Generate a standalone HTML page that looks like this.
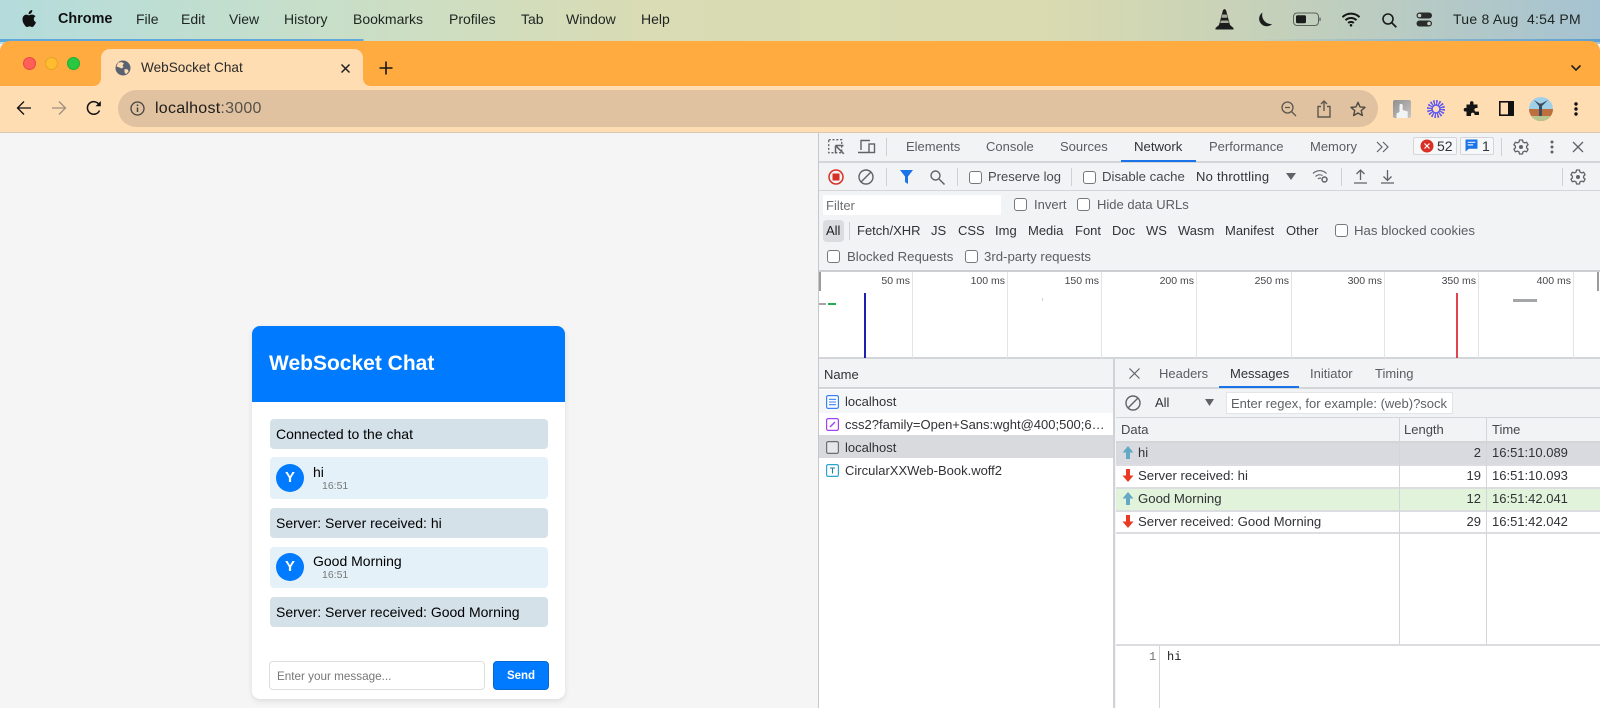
<!DOCTYPE html>
<html><head><meta charset="utf-8"><title>WebSocket Chat</title>
<style>
*{box-sizing:border-box}
html,body{margin:0;padding:0;width:1600px;height:708px;overflow:hidden;background:#f5f5f5;font-family:"Liberation Sans",Arial,sans-serif}
.a{position:absolute}
.t{position:absolute;white-space:nowrap;line-height:16px;font-size:13px;color:#303236}
.m{font-size:14px;color:#1e2422;-webkit-font-smoothing:antialiased}
.g{color:#5a5d62}
.w{font-size:13.2px}
.cb{position:absolute;width:13px;height:13px;border:1px solid #75787c;border-radius:3px;background:#fff}
.sep{position:absolute;width:1px;height:20px;background:#cdd0d4}
.ln{position:absolute;background:#d3d5d9}
.rl{position:absolute;background:#dcdde0}
.tl{position:absolute;font-size:10.5px;line-height:12px;color:#44474b;white-space:nowrap;text-align:right;width:60px;top:275px}
.msg{position:absolute;left:270px;width:278px;border-radius:4px}
svg{position:absolute;overflow:visible}
</style></head><body>

<!-- menu bar -->
<div class="a" style="left:0;top:0;width:1600px;height:44px;background:linear-gradient(90deg,#b4dcdc 0%,#c6dfcb 18%,#d9dcb4 40%,#dadbb0 65%,#c4d0ba 80%,#a6c3d2 100%)"></div>
<div class="a" style="left:0;top:39px;width:1600px;height:3px;background:linear-gradient(90deg,#5fa8dc 0,#5fa8dc 363px,rgba(95,168,220,0) 364px,rgba(95,168,220,0) 1250px,#5fa0d0 1600px)"></div>
<svg style="left:20px;top:9px" width="18" height="20" viewBox="0 0 18 20"><path fill="#111" d="M12.3 1c.1 1.2-.4 2.3-1 3-.7.8-1.700 1.300-2.700 1.200-.1-1.100.4-2.200 1-2.900C10.300 1.500 11.400 1 12.300 1zM15.500 7.200c-1 .6-1.700 1.600-1.700 2.900 0 1.500.9 2.600 2.200 3.100-.4 1.100-.9 2.100-1.600 3-.6.9-1.300 1.800-2.300 1.800-1 0-1.300-.6-2.500-.6s-1.600.6-2.500.6c-1 0-1.700-.9-2.400-1.900C3.300 14.600 2.500 12.400 2.500 10.300c0-3 2-4.700 3.900-4.700 1 0 1.900.7 2.500.7s1.600-.7 2.700-.7c.9 0 2.700.2 3.900 1.600z"/></svg>
<div class="t m" style="left:58px;top:11px;font-weight:700;color:#111;font-size:14.4px">Chrome</div>
<div class="t m" style="left:136px;top:11px">File</div>
<div class="t m" style="left:181px;top:11px">Edit</div>
<div class="t m" style="left:229px;top:11px">View</div>
<div class="t m" style="left:284px;top:11px">History</div>
<div class="t m" style="left:353px;top:11px">Bookmarks</div>
<div class="t m" style="left:449px;top:11px">Profiles</div>
<div class="t m" style="left:521px;top:11px">Tab</div>
<div class="t m" style="left:566px;top:11px">Window</div>
<div class="t m" style="left:641px;top:11px">Help</div>
<div class="t m" style="left:1453px;top:11px;letter-spacing:.25px">Tue 8 Aug</div>
<div class="t m" style="left:1527px;top:11px;letter-spacing:.25px">4:54 PM</div>
<svg style="left:1215px;top:9px" width="19" height="21" viewBox="0 0 19 21"><path fill="#1b1d1c" d="M9.500 0 11 1l4 15 3.500 3v1.500H.5V19L4 16 8 1z"/><path fill="#a9a99a" d="M7.300 5.500h4.400l.8 3.300h-6zM5.800 11.500h7.400l.7 2.500H5.100z"/></svg>
<svg style="left:1256px;top:12px" width="17" height="16" viewBox="0 0 17 16"><path fill="#1b1d1c" d="M6.500.5A7.500 7.500 0 1 0 16 12 A9 9 0 0 1 6.500.5z"/></svg>
<svg style="left:1293px;top:12px" width="29" height="15" viewBox="0 0 29 15"><rect x=".5" y="1" width="25" height="12.500" rx="3.500" fill="none" stroke="#5c625f"/><rect x="3" y="3.200" width="10" height="8" rx="1.500" fill="#1b1d1c"/><path d="M27 5.500v3.500" stroke="#6c716e" stroke-width="1.500"/></svg>
<svg style="left:1341px;top:12px" width="20" height="15" viewBox="0 0 20 15"><path d="M1.500 5.200a12 12 0 0 1 17 0M4.500 8.200a8 8 0 0 1 11 0M7.200 11a4 4 0 0 1 5.600 0" fill="none" stroke="#151716" stroke-width="2"/><circle cx="10" cy="13.300" r="1.300" fill="#151716"/></svg>
<svg style="left:1381px;top:12px" width="17" height="16" viewBox="0 0 17 16"><circle cx="7" cy="7" r="5" fill="none" stroke="#1b1d1c" stroke-width="1.600"/><path d="M10.800 10.800l4.500 4.500" stroke="#1b1d1c" stroke-width="1.800"/></svg>
<svg style="left:1416px;top:12px" width="17" height="15" viewBox="0 0 17 15"><rect x=".5" y=".5" width="15.500" height="6" rx="3" fill="#2a2c2b"/><circle cx="3.500" cy="3.500" r="1.800" fill="#c4d0c0"/><rect x=".5" y="8.500" width="15.500" height="6" rx="3" fill="#2a2c2b"/><circle cx="13" cy="11.500" r="1.800" fill="#c4d0c0"/></svg>

<!-- tab strip -->
<div class="a" style="left:0;top:41px;width:1600px;height:46px;background:#ffab40;border-radius:10px 10px 0 0"></div>
<div class="a" style="left:0;top:86px;width:1600px;height:46px;background:#ffddb3"></div>
<div class="a" style="left:0;top:132px;width:1600px;height:1px;background:#d8c8b4"></div>
<div class="a" style="left:101px;top:49px;width:262px;height:38px;background:#ffddb3;border-radius:9px 9px 0 0"></div>
<svg style="left:93px;top:78px" width="8" height="8" viewBox="0 0 8 8"><path d="M8 0v8H0c5 0 8-3 8-8z" fill="#ffddb3"/></svg>
<svg style="left:363px;top:78px" width="8" height="8" viewBox="0 0 8 8"><path d="M0 0v8h8C3 8 0 5 0 0z" fill="#ffddb3"/></svg>
<div class="a" style="left:23px;top:57px;width:13px;height:13px;border-radius:50%;background:#ff5f57;border:.5px solid #e5484d"></div>
<div class="a" style="left:44.500px;top:57px;width:13px;height:13px;border-radius:50%;background:#febc2e;border:.5px solid #e6a325"></div>
<div class="a" style="left:66.500px;top:57px;width:13px;height:13px;border-radius:50%;background:#28c840;border:.5px solid #22ad37"></div>
<svg style="left:115px;top:60px" width="16" height="16" viewBox="0 0 16 16"><circle cx="8" cy="8" r="7.500" fill="#5a6170"/><path d="M3 2.800 6.500 2 9 3.500 7.500 5.500 8.500 7 6.800 8.500 4.500 7.500 1.500 6.500zM9.500 9l3.500.5.500 2-2.500 2.800-1.500-2z" fill="#ffddb3"/></svg>
<div class="t" style="left:141px;top:60px;font-size:13.600px;color:#2b2a28">WebSocket Chat</div>
<svg style="left:340px;top:63px" width="11" height="11" viewBox="0 0 11 11"><path d="M1.500 1.500l8 8M9.500 1.500l-8 8" stroke="#1f1f1f" stroke-width="1.500"/></svg>
<svg style="left:379px;top:61px" width="14" height="14" viewBox="0 0 14 14"><path d="M7 .5v13M.5 7h13" stroke="#151515" stroke-width="1.600"/></svg>
<svg style="left:1570px;top:64px" width="12" height="8" viewBox="0 0 12 8"><path d="M1.500 1.500 6 6l4.500-4.500" fill="none" stroke="#222" stroke-width="1.600"/></svg>

<!-- toolbar -->
<svg style="left:16px;top:100px" width="16" height="16" viewBox="0 0 16 16"><path d="M15 8H2M8 1.500 1.500 8 8 14.500" fill="none" stroke="#111" stroke-width="1.300"/></svg>
<svg style="left:51px;top:100px" width="16" height="16" viewBox="0 0 16 16"><path d="M1 8h13M8 1.500 14.500 8 8 14.500" fill="none" stroke="#a08f7e" stroke-width="1.300"/></svg>
<svg style="left:86px;top:100px" width="16" height="16" viewBox="0 0 16 16"><path d="M13.500 10.500A6.300 6.300 0 1 1 13 4.500" fill="none" stroke="#111" stroke-width="1.500"/><path d="M14.800 1v5.300H9.500z" fill="#111"/></svg>
<div class="a" style="left:118px;top:90px;width:1260px;height:37px;border-radius:18.500px;background:#e0c2a0"></div>
<svg style="left:130px;top:101px" width="15" height="15" viewBox="0 0 15 15"><circle cx="7.500" cy="7.500" r="6.500" fill="none" stroke="#46433f" stroke-width="1.300"/><path d="M7.500 6.500v4.500" stroke="#46433f" stroke-width="1.500"/><circle cx="7.500" cy="4.300" r=".9" fill="#46433f"/></svg>
<div class="t" style="left:155px;top:101px;font-size:16px;color:#1d1c1a;letter-spacing:.25px">localhost<span style="color:#57524b">:3000</span></div>
<svg style="left:1281px;top:101px" width="16" height="16" viewBox="0 0 16 16"><circle cx="6.500" cy="6.500" r="5.500" fill="none" stroke="#5d574f" stroke-width="1.300"/><path d="M10.500 10.500l4.500 4.500M4 6.500h5" stroke="#5d574f" stroke-width="1.300"/></svg>
<svg style="left:1317px;top:100px" width="14" height="18" viewBox="0 0 14 18"><path d="M4 6.500H1v10.500h12V6.500h-3M7 11V1.500M4 4l3-3 3 3" fill="none" stroke="#5d574f" stroke-width="1.400"/></svg>
<svg style="left:1350px;top:101px" width="16" height="16" viewBox="0 0 16 16"><path d="M8 1.300l2 4.600 5 .4-3.800 3.300 1.200 4.900L8 12l-4.400 2.500 1.200-4.900L1 6.300l5-.4z" fill="none" stroke="#4e4942" stroke-width="1.400" stroke-linejoin="round"/></svg>
<div class="a" style="left:1393px;top:100px;width:18px;height:18px;border-radius:2px;background:linear-gradient(135deg,#8f8f8f,#c8c6c4)"></div>
<svg style="left:1393px;top:100px" width="18" height="18" viewBox="0 0 18 18"><path d="M3.500 18v-4.500l3-1.500V5.500a1.600 1.600 0 0 1 3.200 0V10l5 1.500V18z" fill="#f1f4f6"/></svg>
<svg style="left:1427px;top:100px" width="18" height="18" viewBox="0 0 18 18"><g fill="none" stroke="#5a55f5"><circle cx="9" cy="9" r="6.200" stroke-width="5.600" stroke-dasharray="1.300 1.130"/><circle cx="9" cy="9" r="4" stroke-width="1.500"/></g></svg>
<svg style="left:1464px;top:101px" width="16" height="16" viewBox="0 0 16 16"><path fill="#141414" d="M6 1.500a1.800 1.800 0 0 1 3.500 0V3.500h4V7h-1.300a1.800 1.800 0 0 0 0 3.600H15V14H10.500v-1a1.800 1.800 0 0 0-3.500 0v2H2.500V10.500H1.500a1.800 1.800 0 0 1 0-3.600h1V3.500H6z"/></svg>
<svg style="left:1499px;top:101px" width="15" height="15" viewBox="0 0 15 15"><rect x=".8" y=".8" width="13.400" height="13.400" fill="none" stroke="#111" stroke-width="1.600"/><rect x="9" y="1" width="5" height="13" fill="#111"/></svg>
<svg style="left:1529px;top:97px" width="24" height="24" viewBox="0 0 24 24"><defs><clipPath id="c"><circle cx="12" cy="12" r="12"/></clipPath></defs><g clip-path="url(#c)"><rect width="24" height="24" fill="#9fd0e8"/><rect y="12" width="24" height="12" fill="#bd6f3e"/><rect y="19" width="24" height="5" fill="#b9c58f"/><path d="M5 3l5 6v10h3V9l6-6-6.500 3.500h-2z" fill="#3c4d5e"/></g></svg>
<svg style="left:1574px;top:102px" width="4" height="14" viewBox="0 0 4 14"><circle cx="2" cy="2" r="1.700" fill="#111"/><circle cx="2" cy="7" r="1.700" fill="#111"/><circle cx="2" cy="12" r="1.700" fill="#111"/></svg>

<!-- page: chat -->
<div class="a" style="left:0;top:133px;width:818px;height:575px;background:#f5f5f5"></div>
<div class="a" style="left:252px;top:326px;width:313px;height:373px;background:#fff;border-radius:8px;box-shadow:0 2px 6px rgba(0,0,0,.1)"></div>
<div class="a" style="left:252px;top:326px;width:313px;height:76px;background:#007bff;border-radius:8px 8px 0 0"></div>
<div class="t" style="left:269px;top:353px;font-size:21px;line-height:22px;font-weight:700;color:#fff">WebSocket Chat</div>
<div class="msg" style="top:419px;height:30px;background:#d4e1e9"></div>
<div class="t" style="left:276px;top:426px;font-size:14px;color:#000">Connected to the chat</div>
<div class="msg" style="top:457px;height:42px;background:#e4f1f8"></div>
<div class="a" style="left:276px;top:464px;width:28px;height:28px;border-radius:50%;background:#007bff;color:#fff;font-weight:700;font-size:15px;line-height:28px;text-align:center">Y</div>
<div class="t" style="left:313px;top:464px;font-size:14px;color:#000">hi</div>
<div class="t" style="left:322px;top:480px;font-size:10.500px;line-height:13px;color:#777">16:51</div>
<div class="msg" style="top:508px;height:30px;background:#d4e1e9"></div>
<div class="t" style="left:276px;top:515px;font-size:14px;color:#000">Server: Server received: hi</div>
<div class="msg" style="top:547px;height:41px;background:#e4f1f8"></div>
<div class="a" style="left:276px;top:553px;width:28px;height:28px;border-radius:50%;background:#007bff;color:#fff;font-weight:700;font-size:15px;line-height:28px;text-align:center">Y</div>
<div class="t" style="left:313px;top:553px;font-size:14px;color:#000">Good Morning</div>
<div class="t" style="left:322px;top:569px;font-size:10.500px;line-height:13px;color:#777">16:51</div>
<div class="msg" style="top:597px;height:30px;background:#d4e1e9"></div>
<div class="t" style="left:276px;top:604px;font-size:14px;color:#000">Server: Server received: Good Morning</div>
<div class="a" style="left:269px;top:661px;width:216px;height:29px;background:#fff;border:1px solid #ddd;border-radius:4px"></div>
<div class="t" style="left:277px;top:669px;font-size:11.700px;line-height:15px;color:#777">Enter your message...</div>
<div class="a" style="left:493px;top:661px;width:56px;height:29px;background:#007bff;border:1px solid #0a67cf;border-radius:4px;color:#fff;font-size:11.500px;font-weight:700;line-height:28px;text-align:center">Send</div>

<!-- devtools -->
<div class="a" style="left:818px;top:133px;width:782px;height:575px;background:#f2f3f5;border-left:1px solid #c5c7cb"></div>
<div class="ln" style="left:819px;top:161px;width:781px;height:2px"></div>
<div class="ln" style="left:819px;top:190px;width:781px;height:1px"></div>
<svg style="left:828px;top:139px" width="17" height="16" viewBox="0 0 17 16"><rect x=".7" y=".7" width="13" height="13" fill="none" stroke="#5f6368" stroke-width="1.300" stroke-dasharray="2 1.800"/><path d="M7.500 6.500h8M7.500 6.500v8M7.800 6.800l8 8" stroke="#5f6368" stroke-width="1.500" fill="none"/></svg>
<svg style="left:858px;top:139px" width="18" height="15" viewBox="0 0 18 15"><path d="M3 11V1.500h9M0 13.500h10.500" fill="none" stroke="#5f6368" stroke-width="1.400"/><rect x="11" y="5" width="5.500" height="8.500" fill="none" stroke="#5f6368" stroke-width="1.400"/></svg>
<div class="sep" style="left:886px;top:138px;height:18px"></div>
<div class="t g" style="left:906px;top:139px">Elements</div>
<div class="t g" style="left:986px;top:139px">Console</div>
<div class="t g" style="left:1060px;top:139px">Sources</div>
<div class="t w" style="left:1134px;top:139px">Network</div>
<div class="a" style="left:1121px;top:160px;width:75px;height:2px;background:#1a73e8"></div>
<div class="t g" style="left:1209px;top:139px">Performance</div>
<div class="t g" style="left:1310px;top:139px">Memory</div>
<svg style="left:1376px;top:141px" width="13" height="12" viewBox="0 0 13 12"><path d="M1 1l5 5-5 5M7 1l5 5-5 5" fill="none" stroke="#5f6368" stroke-width="1.200"/></svg>
<div class="a" style="left:1413px;top:137px;width:44px;height:18px;border:1px solid #d3d5d8;border-radius:2px;background:#f6f7f8"></div>
<svg style="left:1420px;top:139px" width="14" height="14" viewBox="0 0 14 14"><circle cx="7" cy="7" r="6.500" fill="#d93025"/><path d="M4.500 4.500l5 5M9.500 4.500l-5 5" stroke="#fff" stroke-width="1.200"/></svg>
<div class="t" style="left:1437px;top:138px;font-size:14px">52</div>
<div class="a" style="left:1460px;top:137px;width:34px;height:18px;border:1px solid #d3d5d8;border-radius:2px;background:#f6f7f8"></div>
<svg style="left:1465px;top:139px" width="13" height="13" viewBox="0 0 12 12"><path d="M.5.500h11v8.500H3.500L.5 11.500z" fill="#1a73e8"/><path d="M2.500 3h7M2.500 5.500h5" stroke="#fff"/></svg>
<div class="t" style="left:1482px;top:138px;font-size:14px">1</div>
<div class="sep" style="left:1501px;top:138px;height:18px"></div>
<svg style="left:1513px;top:139px" width="16" height="16" viewBox="0 0 16 16"><circle cx="8" cy="8" r="2" fill="#5f6368"/><path d="M6.500 1h3l.4 2 1.800.9 1.900-.7 1.500 2.600-1.500 1.300v1.800l1.500 1.300-1.500 2.600-1.900-.7-1.800.9-.4 2h-3l-.4-2-1.800-.9-1.900.7L.9 10.200l1.500-1.300V7.100L.9 5.800l1.500-2.600 1.900.7 1.800-.9z" fill="none" stroke="#5f6368" stroke-width="1.300" stroke-linejoin="round"/></svg>
<svg style="left:1550px;top:140px" width="4" height="14" viewBox="0 0 4 14"><circle cx="2" cy="2" r="1.500" fill="#5f6368"/><circle cx="2" cy="7" r="1.500" fill="#5f6368"/><circle cx="2" cy="12" r="1.500" fill="#5f6368"/></svg>
<svg style="left:1572px;top:141px" width="12" height="12" viewBox="0 0 12 12"><path d="M1 1l10 10M11 1 1 11" stroke="#5f6368" stroke-width="1.300"/></svg>

<!-- toolbar row -->
<svg style="left:828px;top:169px" width="16" height="16" viewBox="0 0 16 16"><circle cx="8" cy="8" r="7" fill="none" stroke="#d93025" stroke-width="1.500"/><rect x="4.500" y="4.500" width="7" height="7" rx=".5" fill="#d93025"/></svg>
<svg style="left:858px;top:169px" width="16" height="16" viewBox="0 0 16 16"><circle cx="8" cy="8" r="7" fill="none" stroke="#5f6368" stroke-width="1.400"/><path d="M3 13 13 3" stroke="#5f6368" stroke-width="1.400"/></svg>
<div class="sep" style="left:886px;top:168px;height:18px"></div>
<svg style="left:900px;top:170px" width="13" height="14" viewBox="0 0 13 14"><path d="M0 0h13L8 6.500V14L5 12V6.500z" fill="#1a73e8"/></svg>
<svg style="left:930px;top:170px" width="15" height="15" viewBox="0 0 15 15"><circle cx="5.500" cy="5.500" r="4.500" fill="none" stroke="#5f6368" stroke-width="1.400"/><path d="M9 9l5.500 5.500" stroke="#5f6368" stroke-width="1.500"/></svg>
<div class="sep" style="left:957px;top:168px;height:18px"></div>
<div class="cb" style="left:969px;top:171px"></div>
<div class="t" style="left:988px;top:169px;color:#45484c">Preserve log</div>
<div class="sep" style="left:1071px;top:168px;height:18px"></div>
<div class="cb" style="left:1083px;top:171px"></div>
<div class="t w" style="left:1102px;top:169px;color:#45484c">Disable cache</div>
<div class="t" style="left:1196px;top:169px;color:#303236;letter-spacing:.25px">No throttling</div>
<svg style="left:1286px;top:173px" width="10" height="7" viewBox="0 0 10 7"><path d="M0 0h10L5 7z" fill="#5f6368"/></svg>
<svg style="left:1312px;top:168px" width="17" height="16" viewBox="0 0 17 16"><path d="M1 5.500a9.500 9.500 0 0 1 13.500 0M3.500 8.500a6 6 0 0 1 7 -1M6 11a3 3 0 0 1 3-.8" fill="none" stroke="#5f6368" stroke-width="1.200"/><circle cx="12.500" cy="11.500" r="2.500" fill="none" stroke="#5f6368" stroke-width="1.500"/></svg>
<div class="sep" style="left:1341px;top:168px;height:18px"></div>
<svg style="left:1354px;top:169px" width="13" height="15" viewBox="0 0 13 15"><path d="M6.500 11V1.500M2.500 5l4-4 4 4M0 14h13" fill="none" stroke="#5f6368" stroke-width="1.300"/></svg>
<svg style="left:1381px;top:169px" width="13" height="15" viewBox="0 0 13 15"><path d="M6.500 1v10M2.500 7.500l4 4 4-4M0 14h13" fill="none" stroke="#5f6368" stroke-width="1.300"/></svg>
<div class="sep" style="left:1562px;top:168px;height:18px"></div>
<svg style="left:1570px;top:169px" width="16" height="16" viewBox="0 0 16 16"><circle cx="8" cy="8" r="2" fill="#5f6368"/><path d="M6.500 1h3l.4 2 1.800.9 1.900-.7 1.500 2.600-1.500 1.300v1.800l1.500 1.300-1.500 2.600-1.900-.7-1.800.9-.4 2h-3l-.4-2-1.800-.9-1.900.7L.9 10.200l1.500-1.300V7.100L.9 5.800l1.500-2.600 1.900.7 1.800-.9z" fill="none" stroke="#5f6368" stroke-width="1.300" stroke-linejoin="round"/></svg>

<!-- filter rows -->
<div class="a" style="left:823px;top:195px;width:178px;height:20px;background:#fff"></div>
<div class="t" style="left:826px;top:198px;color:#6d7074">Filter</div>
<div class="cb" style="left:1014px;top:198px"></div>
<div class="t g" style="left:1034px;top:197px">Invert</div>
<div class="cb" style="left:1077px;top:198px"></div>
<div class="t g" style="left:1097px;top:197px">Hide data URLs</div>
<div class="a" style="left:823px;top:220px;width:21px;height:22px;background:#dadce0;border-radius:4px"></div>
<div class="t" style="left:826px;top:223px;color:#202124">All</div>
<div class="sep" style="left:849px;top:222px;height:18px"></div>
<div class="t" style="left:857px;top:223px">Fetch/XHR</div>
<div class="t" style="left:931px;top:223px">JS</div>
<div class="t" style="left:958px;top:223px">CSS</div>
<div class="t" style="left:995px;top:223px">Img</div>
<div class="t" style="left:1028px;top:223px">Media</div>
<div class="t" style="left:1075px;top:223px">Font</div>
<div class="t" style="left:1112px;top:223px">Doc</div>
<div class="t" style="left:1146px;top:223px">WS</div>
<div class="t" style="left:1178px;top:223px">Wasm</div>
<div class="t" style="left:1225px;top:223px">Manifest</div>
<div class="t" style="left:1286px;top:223px">Other</div>
<div class="cb" style="left:1335px;top:224px"></div>
<div class="t g w" style="left:1354px;top:223px">Has blocked cookies</div>
<div class="cb" style="left:827px;top:250px"></div>
<div class="t g w" style="left:847px;top:249px">Blocked Requests</div>
<div class="cb" style="left:965px;top:250px"></div>
<div class="t g w" style="left:984px;top:249px">3rd-party requests</div>

<!-- timeline -->
<div class="a" style="left:819px;top:270px;width:781px;height:89px;background:#fff;border-top:2px solid #cbcdd1;border-bottom:2px solid #d3d5d9"></div>
<div class="ln" style="left:912px;top:272px;width:1px;height:86px;background:#e3e4e7"></div>
<div class="ln" style="left:1007px;top:272px;width:1px;height:86px;background:#e3e4e7"></div>
<div class="ln" style="left:1101px;top:272px;width:1px;height:86px;background:#e3e4e7"></div>
<div class="ln" style="left:1196px;top:272px;width:1px;height:86px;background:#e3e4e7"></div>
<div class="ln" style="left:1291px;top:272px;width:1px;height:86px;background:#e3e4e7"></div>
<div class="ln" style="left:1384px;top:272px;width:1px;height:86px;background:#e3e4e7"></div>
<div class="ln" style="left:1478px;top:272px;width:1px;height:86px;background:#e3e4e7"></div>
<div class="ln" style="left:1573px;top:272px;width:1px;height:86px;background:#e3e4e7"></div>
<div class="tl" style="left:850px">50 ms</div>
<div class="tl" style="left:945px">100 ms</div>
<div class="tl" style="left:1039px">150 ms</div>
<div class="tl" style="left:1134px">200 ms</div>
<div class="tl" style="left:1229px">250 ms</div>
<div class="tl" style="left:1322px">300 ms</div>
<div class="tl" style="left:1416px">350 ms</div>
<div class="tl" style="left:1511px">400 ms</div>
<div class="a" style="left:819px;top:272px;width:2px;height:19px;background:#9a9b9d"></div>
<div class="a" style="left:1597px;top:272px;width:2px;height:19px;background:#9a9b9d"></div>
<div class="a" style="left:864px;top:293px;width:1.500px;height:65px;background:#2020b0"></div>
<div class="a" style="left:1456px;top:293px;width:1.500px;height:65px;background:#e0444c"></div>
<div class="a" style="left:1513px;top:299px;width:24px;height:2.500px;background:#a5a6a8"></div>
<div class="a" style="left:819px;top:302.500px;width:7px;height:2px;background:#a5a6a8"></div>
<div class="a" style="left:828px;top:302.500px;width:8px;height:2px;background:#1fb14c"></div>
<div class="a" style="left:1042px;top:298px;width:1px;height:3px;background:#d0d1d3"></div>

<!-- name panel -->
<div class="a" style="left:819px;top:360px;width:294px;height:348px;background:#fff"></div>
<div class="a" style="left:819px;top:360px;width:294px;height:29px;background:#f2f3f5;border-bottom:2px solid #d3d5d9"></div>
<div class="t" style="left:824px;top:367px">Name</div>
<div class="a" style="left:819px;top:390px;width:294px;height:23px;background:#f5f6f7"></div>
<div class="a" style="left:819px;top:435px;width:294px;height:23px;background:#d9dadd"></div>
<div class="a" style="left:1113px;top:359px;width:2px;height:349px;background:#d0d2d6"></div>
<svg style="left:826px;top:395px" width="13" height="14" viewBox="0 0 13 14"><rect x=".6" y=".6" width="11.800" height="12.800" rx="1.500" fill="#fff" stroke="#3b82f6" stroke-width="1.200"/><path d="M3 4.300h7M3 7h7M3 9.700h7" stroke="#3b82f6" stroke-width="1.100"/></svg>
<div class="t" style="left:845px;top:394px">localhost</div>
<svg style="left:826px;top:418px" width="13" height="13" viewBox="0 0 13 13"><rect x=".6" y=".6" width="11.800" height="11.800" rx="1.500" fill="#fff" stroke="#a142f4" stroke-width="1.200"/><path d="M4 9 9 4" stroke="#a142f4" stroke-width="1.400"/></svg>
<div class="t" style="left:845px;top:417px">css2?family=Open+Sans:wght@400;500;6…</div>
<svg style="left:826px;top:441px" width="13" height="13" viewBox="0 0 13 13"><rect x=".6" y=".6" width="11.800" height="11.800" rx="1.500" fill="#e6e7e9" stroke="#6c6e72" stroke-width="1.200"/></svg>
<div class="t" style="left:845px;top:440px">localhost</div>
<svg style="left:826px;top:464px" width="13" height="13" viewBox="0 0 13 13"><rect x=".6" y=".6" width="11.800" height="11.800" rx="1.500" fill="#fff" stroke="#2aa5d0" stroke-width="1.200"/><path d="M4 4h5M6.500 4v5.500" stroke="#1f7f9f" stroke-width="1.100"/></svg>
<div class="t" style="left:845px;top:463px">CircularXXWeb-Book.woff2</div>

<!-- messages panel -->
<div class="a" style="left:1115px;top:360px;width:485px;height:57px;background:#f2f3f5"></div>
<div class="ln" style="left:1115px;top:387px;width:485px;height:2px"></div>
<svg style="left:1129px;top:368px" width="11" height="11" viewBox="0 0 11 11"><path d="M.5.500l10 10M10.500.500l-10 10" stroke="#5f6368" stroke-width="1.200"/></svg>
<div class="t g" style="left:1159px;top:366px">Headers</div>
<div class="t" style="left:1230px;top:366px">Messages</div>
<div class="a" style="left:1219px;top:386px;width:80px;height:2px;background:#1a73e8"></div>
<div class="t g" style="left:1310px;top:366px">Initiator</div>
<div class="t g" style="left:1375px;top:366px">Timing</div>
<svg style="left:1125px;top:395px" width="16" height="16" viewBox="0 0 16 16"><circle cx="8" cy="8" r="7" fill="none" stroke="#5f6368" stroke-width="1.400"/><path d="M3 13 13 3" stroke="#5f6368" stroke-width="1.400"/></svg>
<div class="t" style="left:1155px;top:395px">All</div>
<svg style="left:1205px;top:399px" width="9" height="7" viewBox="0 0 9 7"><path d="M0 0h9L4.500 7z" fill="#5f6368"/></svg>
<div class="a" style="left:1226px;top:392px;width:227px;height:22px;background:#fff;border:1px solid #e3e4e7"></div>
<div class="t" style="left:1231px;top:396px;color:#5e6165">Enter regex, for example: (web)?sock</div>

<div class="a" style="left:1116px;top:418px;width:484px;height:227px;background:#fff"></div>
<div class="a" style="left:1116px;top:418px;width:484px;height:24px;background:#f2f3f5"></div>
<div class="ln" style="left:1116px;top:417px;width:484px;height:1px"></div>
<div class="t" style="left:1121px;top:422px;color:#45484c">Data</div>
<div class="t" style="left:1404px;top:422px;color:#45484c">Length</div>
<div class="t" style="left:1492px;top:422px;color:#45484c">Time</div>
<div class="a" style="left:1116px;top:442px;width:484px;height:23px;background:#d9dadf"></div>
<div class="a" style="left:1116px;top:488px;width:484px;height:22px;background:#e1f3da"></div>
<div class="ln" style="left:1116px;top:441px;width:484px;height:2px"></div>
<div class="rl" style="left:1116px;top:464px;width:484px;height:1.500px"></div>
<div class="rl" style="left:1116px;top:487px;width:484px;height:1.500px"></div>
<div class="rl" style="left:1116px;top:510px;width:484px;height:1.500px"></div>
<div class="rl" style="left:1116px;top:532px;width:484px;height:2px"></div>
<div class="ln" style="left:1399px;top:418px;width:1px;height:227px"></div>
<div class="ln" style="left:1486px;top:418px;width:1px;height:227px"></div>
<svg style="left:1122px;top:446px" width="12" height="13" viewBox="0 0 12 13"><path d="M6 0l5.500 6.500H8V13H4V6.500H.5z" fill="#63a9c4"/></svg>
<svg style="left:1122px;top:469px" width="12" height="13" viewBox="0 0 12 13"><path d="M6 13 .5 6.500H4V0h4v6.500h3.500z" fill="#ea3a24"/></svg>
<svg style="left:1122px;top:492px" width="12" height="13" viewBox="0 0 12 13"><path d="M6 0l5.500 6.500H8V13H4V6.500H.5z" fill="#63a9c4"/></svg>
<svg style="left:1122px;top:515px" width="12" height="13" viewBox="0 0 12 13"><path d="M6 13 .5 6.500H4V0h4v6.500h3.500z" fill="#ea3a24"/></svg>
<div class="t" style="left:1138px;top:445px">hi</div>
<div class="t w" style="left:1138px;top:468px">Server received: hi</div>
<div class="t w" style="left:1138px;top:491px">Good Morning</div>
<div class="t w" style="left:1138px;top:514px">Server received: Good Morning</div>
<div class="t" style="left:1360px;top:445px;width:121px;text-align:right">2</div>
<div class="t" style="left:1360px;top:468px;width:121px;text-align:right">19</div>
<div class="t" style="left:1360px;top:491px;width:121px;text-align:right">12</div>
<div class="t" style="left:1360px;top:514px;width:121px;text-align:right">29</div>
<div class="t" style="left:1492px;top:445px">16:51:10.089</div>
<div class="t" style="left:1492px;top:468px">16:51:10.093</div>
<div class="t" style="left:1492px;top:491px">16:51:42.041</div>
<div class="t" style="left:1492px;top:514px">16:51:42.042</div>

<div class="a" style="left:1116px;top:644px;width:484px;height:64px;background:#fff;border-top:2px solid #dadce0"></div>
<div class="ln" style="left:1159px;top:646px;width:1px;height:62px"></div>
<div class="t" style="left:1149px;top:649px;font-family:'Liberation Mono',monospace;font-size:12px;color:#70757a">1</div>
<div class="t" style="left:1167px;top:649px;font-family:'Liberation Mono',monospace;font-size:12px;color:#202124">hi</div>
</body></html>
